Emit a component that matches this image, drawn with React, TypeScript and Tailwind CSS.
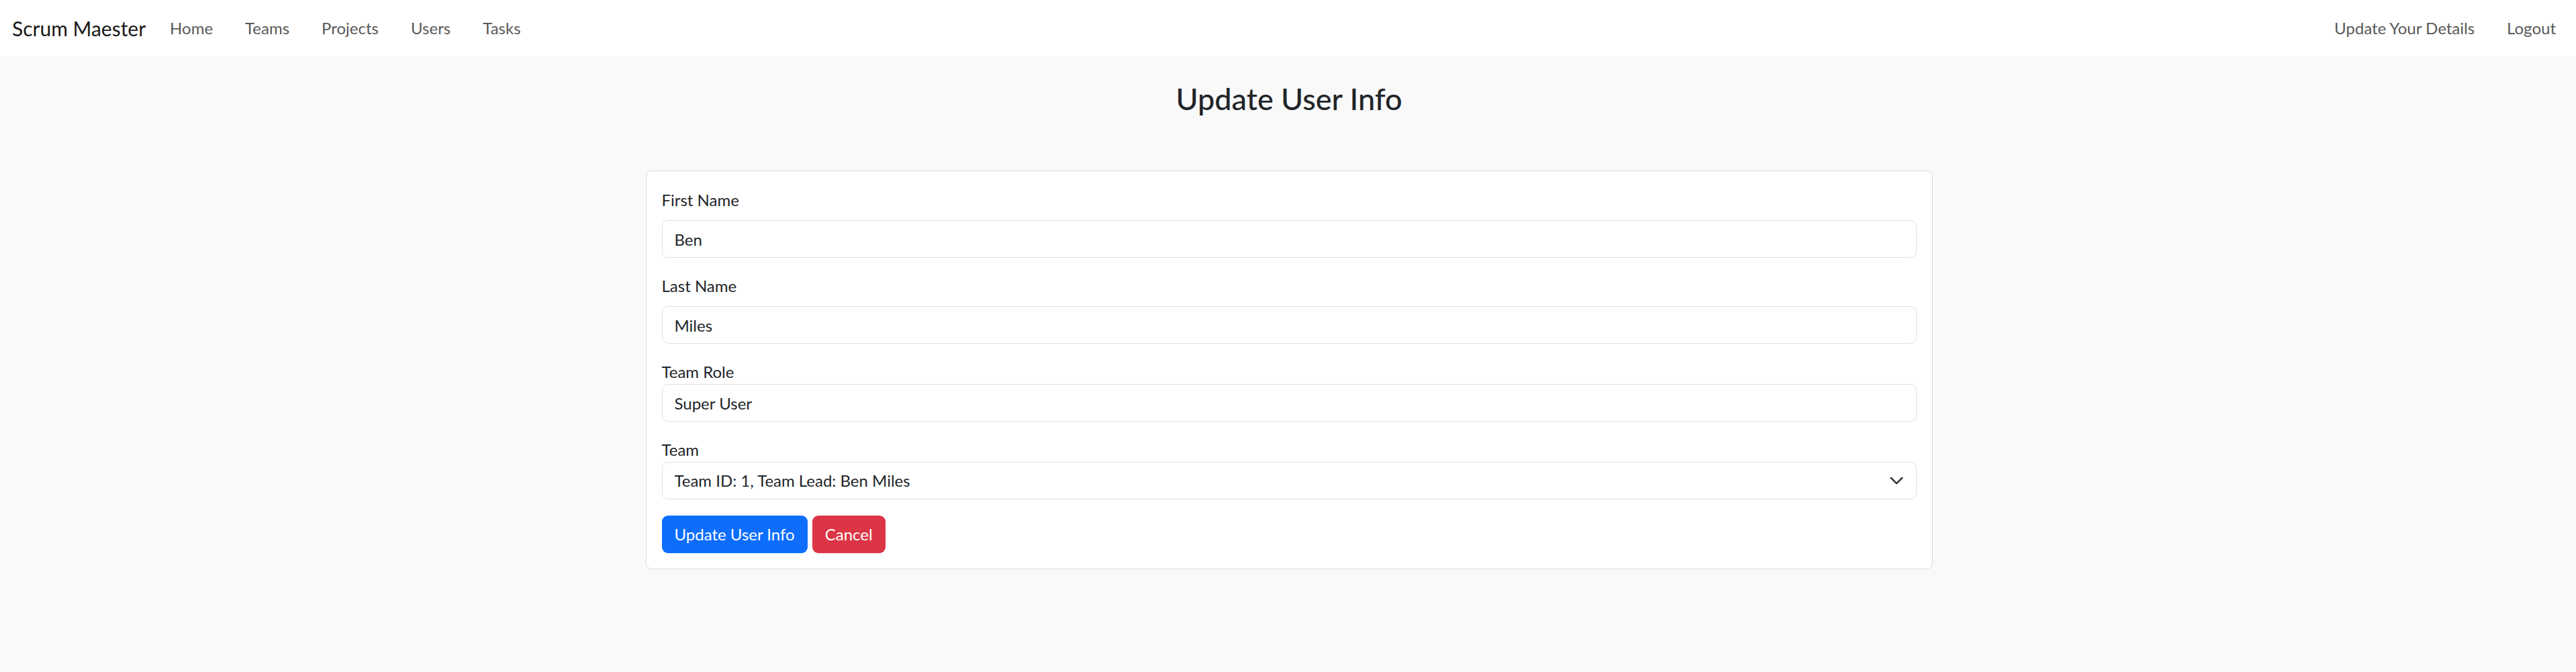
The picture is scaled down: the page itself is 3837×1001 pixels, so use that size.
import { useState } from "react";

const navLinks = ["Home", "Teams", "Projects", "Users", "Tasks"];

function Field({
  label,
  value,
  onChange,
  gap = true,
}: {
  label: string;
  value: string;
  onChange: (v: string) => void;
  gap?: boolean;
}) {
  return (
    <div className="mb-[24px]">
      <label
        className={`block text-[24px] leading-[36px] text-[#212529] ${gap ? "mb-[12px]" : ""}`}
      >
        {label}
      </label>
      <input
        type="text"
        value={value}
        onChange={(e) => onChange(e.target.value)}
        className="block h-[56px] w-full rounded-[9px] border border-[#dee2e6] bg-white px-[18px] text-[24px] text-[#212529] outline-none"
      />
    </div>
  );
}

export default function App() {
  const [firstName, setFirstName] = useState("Ben");
  const [lastName, setLastName] = useState("Miles");
  const [role, setRole] = useState("Super User");
  const [team, setTeam] = useState("1");

  return (
    <div className="min-h-screen bg-[#f9f9f9] font-['Lato',sans-serif] text-[#212529]">
      <nav className="flex h-[84px] items-center justify-between bg-white px-[18px]">
        <div className="flex items-center">
          <a className="mr-[24px] text-[30px] leading-[45px] text-[#1a1a1a]">Scrum Maester</a>
          <ul className="flex gap-[24px]">
            {navLinks.map((link) => (
              <li key={link}>
                <a className="px-[12px] text-[24px] leading-[36px] text-[#595959]">{link}</a>
              </li>
            ))}
          </ul>
        </div>
        <ul className="flex gap-[24px]">
          <li>
            <a className="px-[12px] text-[24px] leading-[36px] text-[#595959]">Update Your Details</a>
          </li>
          <li>
            <a className="px-[12px] text-[24px] leading-[36px] text-[#595959]">Logout</a>
          </li>
        </ul>
      </nav>

      <main className="pt-[36px] pl-[3px]">
        <h1 className="text-center text-[45px] leading-[54px] font-medium">Update User Info</h1>

        <div className="mx-auto mt-[80px] w-[1917px] rounded-[9px] border border-[#dadada] bg-white px-[23px] pt-[25px] pb-[23px]">
          <Field label="First Name" value={firstName} onChange={setFirstName} />
          <Field label="Last Name" value={lastName} onChange={setLastName} />
          <Field label="Team Role" value={role} onChange={setRole} gap={false} />

          <div className="mb-[24px]">
            <label className="block text-[24px] leading-[36px]">Team</label>
            <div className="relative">
              <select
                value={team}
                onChange={(e) => setTeam(e.target.value)}
                className="block h-[56px] w-full appearance-none rounded-[9px] border border-[#dee2e6] bg-white px-[18px] text-[24px] text-[#212529] outline-none"
              >
                <option value="1">Team ID: 1, Team Lead: Ben Miles</option>
              </select>
              <svg
                className="pointer-events-none absolute top-1/2 right-[19px] -translate-y-1/2"
                width="22"
                height="22"
                viewBox="0 0 16 16"
                fill="none"
                stroke="#343a40"
                strokeWidth="2"
                strokeLinecap="round"
                strokeLinejoin="round"
              >
                <path d="m2 5 6 6 6-6" />
              </svg>
            </div>
          </div>

          <div className="flex gap-[7px]">
            <button className="h-[56px] rounded-[9px] bg-[#0d6efd] px-[19px] text-[24px] text-white">
              Update User Info
            </button>
            <button className="h-[56px] rounded-[9px] bg-[#dc3545] px-[19px] text-[24px] text-white">
              Cancel
            </button>
          </div>
        </div>
      </main>
    </div>
  );
}
